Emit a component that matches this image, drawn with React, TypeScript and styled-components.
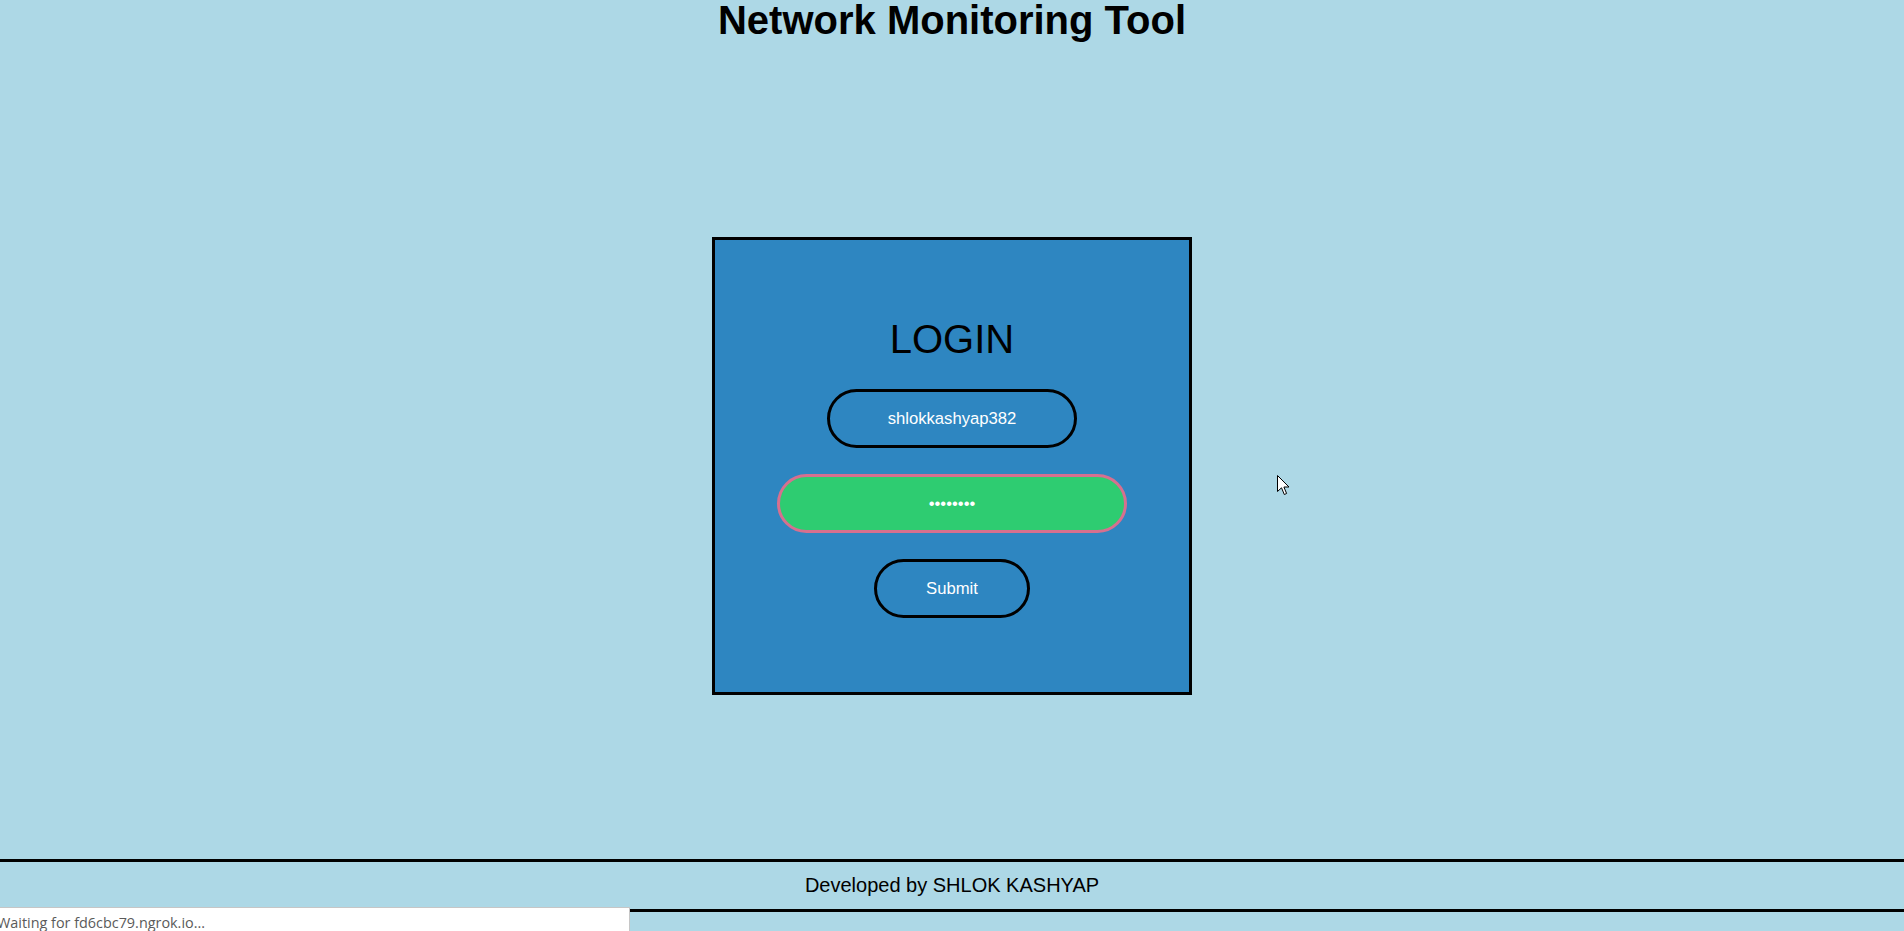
import * as React from "react"
import styled, { createGlobalStyle } from "styled-components"

const GlobalStyle = createGlobalStyle`
  html, body {
    margin: 0;
    padding: 0;
    background: #add8e6;
    font-family: "Liberation Sans", Arial, sans-serif;
  }
`

const Page = styled.div`
  min-height: 100vh;
  display: flex;
  flex-direction: column;
  align-items: center;
  position: relative;
  overflow: hidden;
`

const Title = styled.h1`
  margin: 0;
  font-size: 40px;
  line-height: 1;
  font-weight: bold;
  color: #000;
`

const LoginBox = styled.form`
  box-sizing: border-box;
  margin-top: 197px;
  width: 480px;
  height: 458px;
  border: 3px solid #000;
  background: #2e86c1;
  display: flex;
  flex-direction: column;
  align-items: center;
  padding: 76px 0 74px;
`

const Heading = styled.h2`
  margin: 0 0 27px;
  font-size: 40px;
  font-weight: normal;
  line-height: 46px;
  color: #000;
`

const Fields = styled.div`
  display: flex;
  flex-direction: column;
  align-items: center;
  gap: 26px;
`

interface PillProps {
  $active?: boolean
}

const Pill = styled.input<PillProps>`
  box-sizing: border-box;
  width: ${p => (p.$active ? "350px" : "250px")};
  height: 59px;
  border-radius: 30px;
  border: 3px solid ${p => (p.$active ? "#d6708f" : "#000")};
  background: ${p => (p.$active ? "#2ecc71" : "transparent")};
  color: #fff;
  text-align: center;
  font-family: "Liberation Sans", Arial, sans-serif;
  font-size: 16.67px;
  outline: none;
  padding: 0 20px;
  transition: 0.25s;
`

const SubmitButton = styled.button`
  box-sizing: border-box;
  width: 156px;
  height: 59px;
  border-radius: 30px;
  border: 3px solid #000;
  background: transparent;
  color: #fff;
  font-family: "Liberation Sans", Arial, sans-serif;
  font-size: 16.67px;
  cursor: pointer;
`

const Footer = styled.footer`
  align-self: stretch;
  margin-top: 164px;
  border-top: 3px solid #000;
  border-bottom: 3px solid #000;
  height: 47px;
  line-height: 47px;
  text-align: center;
  font-size: 20px;
  color: #000;
`

const StatusBar = styled.div`
  position: fixed;
  left: 0;
  bottom: 0;
  box-sizing: border-box;
  width: 630px;
  height: 24px;
  padding-top: 4px;
  background: #fff;
  border-top: 1px solid #c6c6c6;
  border-right: 1px solid #c6c6c6;
  color: #5a5a5a;
  font-family: "Open Sans", "Liberation Sans", sans-serif;
  font-size: 14.4px;
  line-height: 22px;
  text-indent: -3px;
  white-space: nowrap;
  overflow: hidden;
`

const Cursor = styled.svg`
  position: absolute;
  left: 1277px;
  top: 475px;
  pointer-events: none;
`

export default function App() {
  return (
    <Page>
      <GlobalStyle />
      <Title>Network Monitoring Tool</Title>
      <LoginBox onSubmit={e => e.preventDefault()}>
        <Heading>LOGIN</Heading>
        <Fields>
          <Pill type="text" defaultValue="shlokkashyap382" />
          <Pill type="password" defaultValue="12345678" $active />
          <SubmitButton type="submit">Submit</SubmitButton>
        </Fields>
      </LoginBox>
      <Footer>Developed by SHLOK KASHYAP</Footer>
      <StatusBar>Waiting for fd6cbc79.ngrok.io...</StatusBar>
      <Cursor width="14" height="22" viewBox="0 0 14 22">
        <path
          d="M0.5 0.5 L0.5 16.5 L4.5 12.8 L7.3 19.5 L9.6 18.5 L6.9 12 L12 12 Z"
          fill="#fff"
          stroke="#000"
          strokeWidth="1"
        />
      </Cursor>
    </Page>
  )
}
